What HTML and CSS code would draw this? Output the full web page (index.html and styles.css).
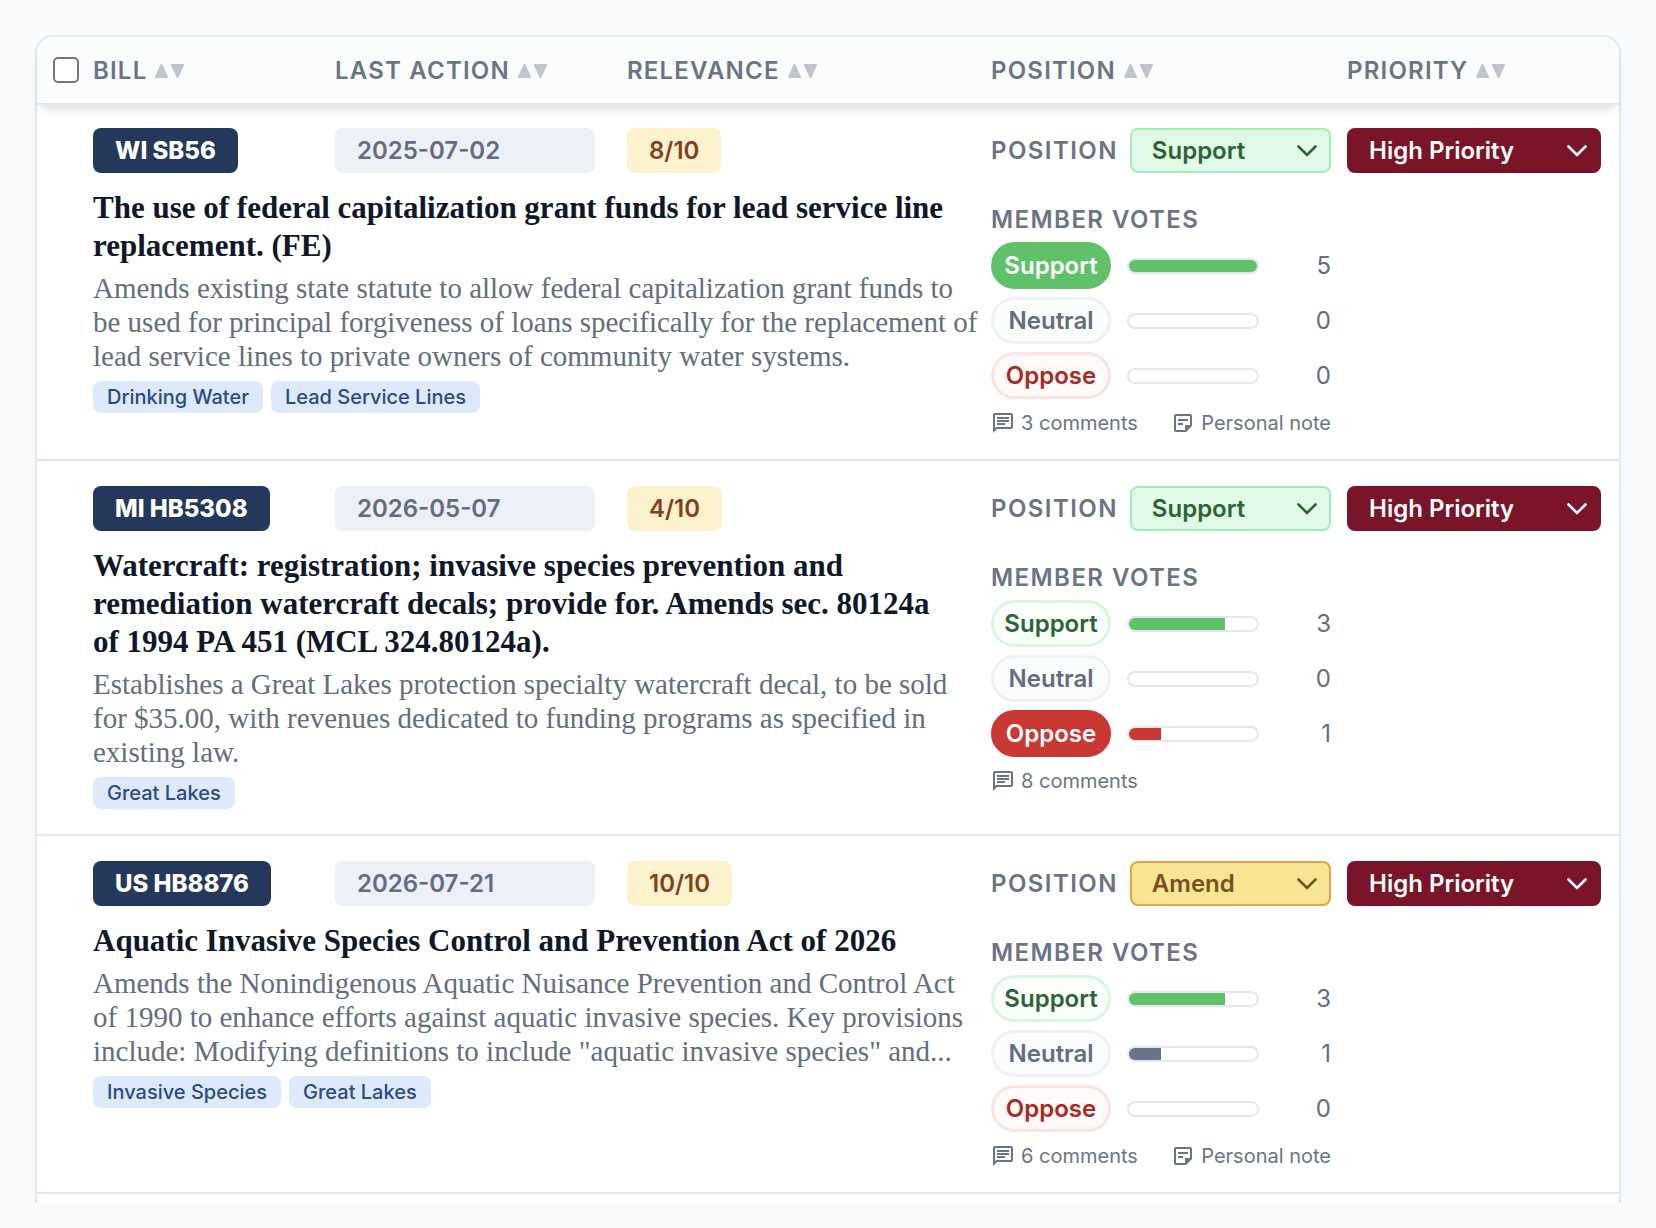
FILE: index.html
```html
<!DOCTYPE html>
<html lang="en">

<head>
    <meta charset="utf-8">
    <title>Bills</title>
    <link rel="stylesheet" href="styles.css">
</head>

<body>
    <!-- shared icons -->
    <svg class="sprite" aria-hidden="true">
        <symbol id="sort" viewBox="0 0 30 14">
            <path d="M6.500 1 L12 13 H1 Z M17 1 H28 L22.500 13 Z" fill="currentColor" stroke="currentColor" stroke-width="2" stroke-linejoin="round" />
        </symbol>
        <symbol id="chevron" viewBox="0 0 20 14">
            <path d="M1.500 2.500 L10 11 L18.500 2.500" fill="none" stroke="currentColor" stroke-width="2.600" stroke-linecap="round" />
        </symbol>
        <symbol id="comment" viewBox="0 0 24 24">
            <path fill="currentColor" d="M4 4h16v12H5.170L4 17.170V4m0-2c-1.100 0-1.990.9-1.990 2L2 22l4-4h14c1.100 0 2-.9 2-2V4c0-1.100-.9-2-2-2H4zm2 10h8v2H6v-2zm0-3h12v2H6V9zm0-3h12v2H6V6z" />
        </symbol>
        <symbol id="note" viewBox="0 0 24 24">
            <path fill="currentColor" d="M19 5v9h-5v5H5V5h14m0-2H5c-1.100 0-2 .9-2 2v14c0 1.100.9 2 2 2h10l6-6V5c0-1.100-.9-2-2-2zm-7 11H7v-2h5v2zm5-4H7V8h10v2z" />
        </symbol>
    </svg>

    <main class="page">
        <table class="bills">
            <thead>
                <tr class="head-row">
                    <th><input class="check" type="checkbox" aria-label="Select all bills"></th>
                    <th><button class="sort">BILL <svg><use href="#sort" /></svg></button></th>
                    <th><button class="sort">LAST ACTION <svg><use href="#sort" /></svg></button></th>
                    <th><button class="sort">RELEVANCE <svg><use href="#sort" /></svg></button></th>
                    <th><button class="sort">POSITION <svg><use href="#sort" /></svg></button></th>
                    <th><button class="sort">PRIORITY <svg><use href="#sort" /></svg></button></th>
                </tr>
            </thead>
            <tbody>
                <tr class="bill">
                    <td class="number"><span class="badge navy">WI SB56</span></td>
                    <td class="action"><span class="badge date">2025-07-02</span></td>
                    <td class="relevance"><span class="badge score">8/10</span></td>
                    <td class="summary">
                        <h2>The use of federal capitalization grant funds for lead service line<br>
                            replacement. (FE)</h2>
                        <p>Amends existing state statute to allow federal capitalization grant funds to<br>
                            be used for principal forgiveness of loans specifically for the replacement of<br>
                            lead service lines to private owners of community water systems.</p>
                        <div class="tags">
                            <span class="tag">Drinking Water</span>
                            <span class="tag">Lead Service Lines</span>
                        </div>
                    </td>
                    <td class="position">
                        <div class="field">
                            <label class="caption" for="position1">POSITION</label>
                            <div class="select support">
                                <select id="position1">
                                    <option selected>Support</option>
                                    <option>Neutral</option>
                                    <option>Amend</option>
                                    <option>Oppose</option>
                                </select>
                                <svg><use href="#chevron" /></svg>
                            </div>
                        </div>
                        <h3 class="caption">MEMBER VOTES</h3>
                        <div class="votes">
                            <div class="vote support"><button class="pill voted">Support</button><div class="bar"><div class="fill" style="width: 100%"></div></div><span class="count">5</span></div>
                            <div class="vote neutral"><button class="pill">Neutral</button><div class="bar"><div class="fill" style="width: 0%"></div></div><span class="count">0</span></div>
                            <div class="vote oppose"><button class="pill">Oppose</button><div class="bar"><div class="fill" style="width: 0%"></div></div><span class="count">0</span></div>
                        </div>
                        <div class="notes">
                            <button class="note"><svg><use href="#comment" /></svg>3 comments</button>
                            <button class="note"><svg><use href="#note" /></svg>Personal note</button>
                        </div>
                    </td>
                    <td class="priority">
                        <div class="select high">
                            <select aria-label="Priority">
                                <option selected>High Priority</option>
                                <option>Low Priority</option>
                            </select>
                            <svg><use href="#chevron" /></svg>
                        </div>
                    </td>
                </tr>
                <tr class="bill">
                    <td class="number"><span class="badge navy">MI HB5308</span></td>
                    <td class="action"><span class="badge date">2026-05-07</span></td>
                    <td class="relevance"><span class="badge score">4/10</span></td>
                    <td class="summary">
                        <h2>Watercraft: registration; invasive species prevention and<br>
                            remediation watercraft decals; provide for. Amends sec. 80124a<br>
                            of 1994 PA 451 (MCL 324.80124a).</h2>
                        <p>Establishes a Great Lakes protection specialty watercraft decal, to be sold<br>
                            for $35.00, with revenues dedicated to funding programs as specified in<br>
                            existing law.</p>
                        <div class="tags">
                            <span class="tag">Great Lakes</span>
                        </div>
                    </td>
                    <td class="position">
                        <div class="field">
                            <label class="caption" for="position2">POSITION</label>
                            <div class="select support">
                                <select id="position2">
                                    <option selected>Support</option>
                                    <option>Neutral</option>
                                    <option>Amend</option>
                                    <option>Oppose</option>
                                </select>
                                <svg><use href="#chevron" /></svg>
                            </div>
                        </div>
                        <h3 class="caption">MEMBER VOTES</h3>
                        <div class="votes">
                            <div class="vote support"><button class="pill">Support</button><div class="bar"><div class="fill" style="width: 75%"></div></div><span class="count">3</span></div>
                            <div class="vote neutral"><button class="pill">Neutral</button><div class="bar"><div class="fill" style="width: 0%"></div></div><span class="count">0</span></div>
                            <div class="vote oppose"><button class="pill voted">Oppose</button><div class="bar"><div class="fill" style="width: 25%"></div></div><span class="count">1</span></div>
                        </div>
                        <div class="notes">
                            <button class="note"><svg><use href="#comment" /></svg>8 comments</button>
                        </div>
                    </td>
                    <td class="priority">
                        <div class="select high">
                            <select aria-label="Priority">
                                <option selected>High Priority</option>
                                <option>Low Priority</option>
                            </select>
                            <svg><use href="#chevron" /></svg>
                        </div>
                    </td>
                </tr>
                <tr class="bill">
                    <td class="number"><span class="badge navy">US HB8876</span></td>
                    <td class="action"><span class="badge date">2026-07-21</span></td>
                    <td class="relevance"><span class="badge score">10/10</span></td>
                    <td class="summary">
                        <h2>Aquatic Invasive Species Control and Prevention Act of 2026</h2>
                        <p>Amends the Nonindigenous Aquatic Nuisance Prevention and Control Act<br>
                            of 1990 to enhance efforts against aquatic invasive species. Key provisions<br>
                            include: Modifying definitions to include "aquatic invasive species" and...</p>
                        <div class="tags">
                            <span class="tag">Invasive Species</span>
                            <span class="tag">Great Lakes</span>
                        </div>
                    </td>
                    <td class="position">
                        <div class="field">
                            <label class="caption" for="position3">POSITION</label>
                            <div class="select amend">
                                <select id="position3">
                                    <option>Support</option>
                                    <option>Neutral</option>
                                    <option selected>Amend</option>
                                    <option>Oppose</option>
                                </select>
                                <svg><use href="#chevron" /></svg>
                            </div>
                        </div>
                        <h3 class="caption">MEMBER VOTES</h3>
                        <div class="votes">
                            <div class="vote support"><button class="pill">Support</button><div class="bar"><div class="fill" style="width: 75%"></div></div><span class="count">3</span></div>
                            <div class="vote neutral"><button class="pill">Neutral</button><div class="bar"><div class="fill" style="width: 25%"></div></div><span class="count">1</span></div>
                            <div class="vote oppose"><button class="pill">Oppose</button><div class="bar"><div class="fill" style="width: 0%"></div></div><span class="count">0</span></div>
                        </div>
                        <div class="notes">
                            <button class="note"><svg><use href="#comment" /></svg>6 comments</button>
                            <button class="note"><svg><use href="#note" /></svg>Personal note</button>
                        </div>
                    </td>
                    <td class="priority">
                        <div class="select high">
                            <select aria-label="Priority">
                                <option selected>High Priority</option>
                                <option>Low Priority</option>
                            </select>
                            <svg><use href="#chevron" /></svg>
                        </div>
                    </td>
                </tr>
            </tbody>
        </table>
    </main>
</body>

</html>
```

FILE: styles.css
```css
* {
    box-sizing: border-box;
}

body {
    margin: 0;
    background-color: #f8fafc;
    font-family: Inter, "Liberation Sans", sans-serif;
    font-size: 24px;
    line-height: 30px;
    color: #6b7487;
}

button,
select {
    font: inherit;
    color: inherit;
    cursor: pointer;
}

button {
    padding: 0;
    border: 0;
    background: none;
}

h2,
h3,
p {
    margin: 0;
}

th,
td {
    padding: 0;
    text-align: left;
}

.sprite {
    display: none;
}

.page {
    height: calc(100vh - 25px);
    padding: 35px 35px 0;
    overflow: hidden;
}

.bills {
    display: block;
    min-height: 100%;
    border: 2px solid #e2e8f0;
    border-bottom: 0;
    border-radius: 18px 18px 0 0;
    background-color: #fff;
    box-shadow: 0 4px 4px rgba(0, 0, 0, .04);
}

thead,
tbody {
    display: block;
}

thead {
    position: sticky;
    top: 0;
    z-index: 1;
    margin-bottom: -2px;
    border-bottom: 2px solid #e2e8f0;
    border-radius: 16px 16px 0 0;
    background-color: #fbfdfd;
    box-shadow: 0 8px 10px -4px rgba(0, 0, 0, .14);
}

.head-row,
.bill {
    display: grid;
    grid-template-columns: 24px 226fr 276fr 348fr 340fr 254fr;
    column-gap: 16px;
    padding: 0 18px 0 16px;
}

.head-row {
    align-items: center;
    height: 66px;
}

.check {
    display: block;
    appearance: none;
    width: 26px;
    height: 26px;
    margin: 0;
    border: 2px solid #767676;
    border-radius: 5px;
    background-color: #fff;
}

.sort {
    display: flex;
    align-items: center;
    gap: 8px;
    padding-top: 2px;
    font-weight: 600;
    letter-spacing: .05em;
}

.sort svg {
    width: 30px;
    height: 14px;
    color: #c0c4cd;
}

.bill {
    grid-template-rows: 45px 1fr;
    row-gap: 16px;
    padding-top: 25px;
    padding-bottom: 23px;
    border-bottom: 2px solid #e2e8f0;
}

.number {
    grid-column: 2;
}

.summary {
    grid-column: 2 / 5;
    grid-row: 2;
    white-space: nowrap;
}

.position {
    grid-column: 5;
    grid-row: 1 / 3;
}

.priority {
    grid-column: 6;
    grid-row: 1;
}

.badge {
    display: block;
    width: fit-content;
    padding: 0 22px;
    border-radius: 8px;
    font-weight: 600;
    line-height: 45px;
}

.navy {
    background-color: #24385b;
    color: #fff;
    font-weight: 800;
}

.date {
    width: auto;
    margin-right: 16px;
    background-color: #edf0f6;
    color: #636c82;
}

.score {
    background-color: #fcf2cd;
    color: #854018;
}

.summary h2 {
    margin-bottom: 6px;
    font-family: "Liberation Serif", serif;
    font-size: 31px;
    font-weight: 700;
    line-height: 38px;
    color: #0f172a;
}

.summary p {
    margin-bottom: 8px;
    font-family: "Liberation Serif", serif;
    font-size: 29px;
    line-height: 34px;
    color: #646d82;
}

.tags {
    display: flex;
    gap: 8px;
    padding-bottom: 2px;
}

.tag {
    padding: 0 14px;
    border-radius: 8px;
    background-color: #dfe9fc;
    color: #2b4a87;
    font-size: 20px;
    font-weight: 500;
    line-height: 32px;
}

.field {
    display: flex;
    align-items: center;
    gap: 12px;
    margin-bottom: 32px;
}

.caption {
    font-size: 24px;
    font-weight: 600;
    letter-spacing: .06em;
}

.select {
    position: relative;
    flex: 1;
}

.select select {
    display: block;
    appearance: none;
    width: 100%;
    height: 45px;
    padding: 0 40px 0 20px;
    border: 2px solid;
    border-radius: 8px;
    font-weight: 600;
}

.select svg {
    position: absolute;
    top: 16px;
    right: 14px;
    width: 20px;
    height: 14px;
    pointer-events: none;
}

.select.support {
    color: #2c6337;
}

.select.support select {
    border-color: #a0eeb3;
    background-color: #e1fae7;
}

.select.amend {
    color: #7b4d20;
}

.select.amend select {
    border-color: #dfa546;
    background-color: #f9e695;
}

.select.high {
    color: #fff;
}

.select.high select {
    border-color: #7a1428;
    background-color: #7a1428;
}

.votes {
    display: grid;
    gap: 8px;
    margin: 7px 0 12px;
}

.vote {
    display: flex;
    align-items: center;
    gap: 16px;
}

.pill {
    width: 120px;
    height: 47px;
    border: 3px solid;
    border-radius: 24px;
    font-weight: 600;
}

.support .pill {
    border-color: #daf5e2;
    background-color: #fafffa;
    color: #2c6337;
}

.neutral .pill {
    border-color: #eef1f5;
    background-color: #fbfdfd;
    color: #636c82;
}

.oppose .pill {
    border-color: #fbe2e3;
    background-color: #fffafa;
    color: #a82a24;
}

.support .voted {
    border-color: #5fc26a;
    background-color: #5fc26a;
    color: #fff;
}

.oppose .voted {
    border-color: #c93832;
    background-color: #c93832;
    color: #fff;
}

.bar {
    width: 132px;
    height: 16px;
    border: 2px solid #e2e8f0;
    border-radius: 8px;
    overflow: hidden;
}

.fill {
    height: 100%;
}

.support .fill {
    background-color: #5fc26a;
}

.neutral .fill {
    background-color: #6b7487;
}

.oppose .fill {
    background-color: #c93832;
}

.count {
    margin-left: auto;
    color: #636c82;
}

.notes {
    display: flex;
    align-items: flex-start;
    justify-content: space-between;
    height: 25px;
}

.note {
    display: flex;
    align-items: center;
    gap: 6px;
    font-size: 20px;
    line-height: 24px;
    white-space: nowrap;
}

.note svg {
    width: 24px;
    height: 24px;
}
```
